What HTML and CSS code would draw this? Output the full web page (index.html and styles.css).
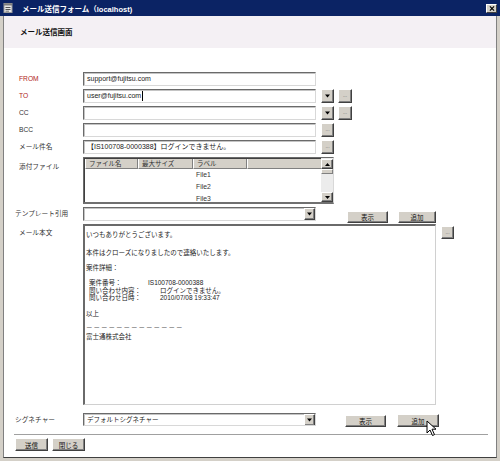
FILE: index.html
```html
<!DOCTYPE html>
<html lang="ja">
<head>
<meta charset="utf-8">
<title>メール送信フォーム</title>
<link rel="stylesheet" href="styles.css">
</head>
<body>
<div class="window">
  <div class="titlebar">
    <svg class="app-icon" viewBox="0 0 10 10">
      <rect x="1" y="0.5" width="8" height="9" fill="#e6e6e6" stroke="#9a9a9a" stroke-width="1"/>
      <rect x="1" y="0.5" width="8" height="2" fill="#7d7d7d"/>
      <line x1="2.5" y1="4.5" x2="7.5" y2="4.5" stroke="#555" stroke-width="1"/>
      <line x1="2.5" y1="6.5" x2="7.5" y2="6.5" stroke="#555" stroke-width="1"/>
      <line x1="2.5" y1="8.2" x2="6" y2="8.2" stroke="#555" stroke-width="0.8"/>
    </svg>
    <span class="title">メール送信フォーム（localhost)</span>
    <span class="close-btn">
      <svg viewBox="0 0 7 6" class="close-x">
        <path d="M1 0.5 L6 5.5 M6 0.5 L1 5.5" stroke="#000" stroke-width="1.4"/>
      </svg>
    </span>
  </div>

  <div class="client">
    <div class="header"><span class="screen-title">メール送信画面</span></div>

    <div class="form">
      <div class="row">
        <span class="label req">FROM</span>
        <div class="field">support@fujitsu.com</div>
      </div>
      <div class="row">
        <span class="label req">TO</span>
        <div class="field">user@fujitsu.com<span class="caret"></span></div>
        <span class="btn drop-btn"><svg viewBox="0 0 5 4"><polygon points="0,0.5 5,0.5 2.5,3.5" fill="#000"/></svg></span>
        <span class="btn dots-btn">...</span>
      </div>
      <div class="row">
        <span class="label">CC</span>
        <div class="field"></div>
        <span class="btn drop-btn"><svg viewBox="0 0 5 4"><polygon points="0,0.5 5,0.5 2.5,3.5" fill="#000"/></svg></span>
        <span class="btn dots-btn">...</span>
      </div>
      <div class="row">
        <span class="label">BCC</span>
        <div class="field"></div>
        <span class="btn dots-btn single">...</span>
      </div>
      <div class="row">
        <span class="label">メール件名</span>
        <div class="field">【IS100708-0000388】ログインできません。</div>
        <span class="btn dots-btn single">...</span>
      </div>

      <div class="row row-files">
        <span class="label label-top">添付ファイル</span>
        <div class="filelist">
          <div class="filelist-main">
            <div class="filelist-head">
              <span class="hcell c1">ファイル名</span>
              <span class="hcell c2">最大サイズ</span>
              <span class="hcell c3">ラベル</span>
              <span class="hcell c4"></span>
            </div>
            <div class="filelist-body">
              <div class="frow">File1</div>
              <div class="frow">File2</div>
              <div class="frow">File3</div>
            </div>
          </div>
          <div class="vscroll">
            <span class="sbtn"><svg viewBox="0 0 5 3"><polygon points="2.5,0 5,3 0,3" fill="#000"/></svg></span>
            <span class="sthumb"></span>
            <span class="strack"></span>
            <span class="sbtn"><svg viewBox="0 0 5 3"><polygon points="0,0 5,0 2.5,3" fill="#000"/></svg></span>
          </div>
        </div>
      </div>

      <div class="row row-template">
        <span class="label label-wide">テンプレート引用</span>
        <div class="field select">
          <span class="select-text"></span>
          <span class="btn select-arrow"><svg viewBox="0 0 5 4"><polygon points="0,0.5 5,0.5 2.5,3.5" fill="#000"/></svg></span>
        </div>
        <span class="btn push tpl-show">表示</span>
        <span class="btn push tpl-add">追加</span>
      </div>

      <div class="row row-body">
        <span class="label label-top2">メール本文</span>
        <div class="field mailbody">
          <p class="p1">いつもありがとうございます。</p>
          <p class="p2">本件はクローズになりましたので連絡いたします。</p>
          <p class="p3">案件詳細：</p>
          <div class="details">
            <div class="drow"><span class="k k1">案件番号：</span><span class="v">IS100708-0000388</span></div>
            <div class="drow"><span class="k">問い合わせ内容：</span><span class="v">ログインできません。</span></div>
            <div class="drow"><span class="k">問い合わせ日時：</span><span class="v">2010/07/08 19:33:47</span></div>
          </div>
          <p class="p5">以上</p>
          <p class="p6 dashes">－－－－－－－－－－－－－</p>
          <p class="p7">富士通株式会社</p>
        </div>
        <span class="btn dots-btn body-dots">...</span>
      </div>

      <div class="row row-sign">
        <span class="label label-wide">シグネチャー</span>
        <div class="field select">
          <span class="select-text">デフォルトシグネチャー</span>
          <span class="btn select-arrow"><svg viewBox="0 0 5 4"><polygon points="0,0.5 5,0.5 2.5,3.5" fill="#000"/></svg></span>
        </div>
        <span class="btn push sig-show">表示</span>
        <span class="btn push sig-add">追加</span>
      </div>
    </div>

    <div class="separator"></div>

    <div class="footer">
      <span class="btn push foot-btn">送信</span>
      <span class="btn push foot-btn">閉じる</span>
    </div>
  </div>

  <svg class="cursor" viewBox="0 0 12 17">
    <path d="M1 1 L1 13 L4 10 L6.5 15.5 L8.5 14.6 L6 9.2 L10 9.2 Z" fill="#fff" stroke="#000" stroke-width="1"/>
  </svg>
</div>
</body>
</html>
```

FILE: styles.css
```css
* { box-sizing: border-box; }
html, body { margin: 0; padding: 0; }
body {
  width: 500px;
  height: 461px;
  overflow: hidden;
  background: #d4d0c8;
  font-family: "Liberation Sans", "Noto Sans CJK JP", sans-serif;
  color: #222;
}
.window {
  width: 500px;
  height: 461px;
  display: flex;
  flex-direction: column;
  position: relative;
}

/* title bar */
.titlebar {
  height: 16px;
  flex: none;
  background: #0b2364;
  display: flex;
  align-items: center;
  padding: 0 3px;
}
.app-icon { width: 10px; height: 10px; flex: none; }
.title {
  flex: 1;
  margin-left: 9px;
  color: #fff;
  font-weight: bold;
  font-size: 7.5px;
  white-space: nowrap;
}
.close-btn {
  width: 11px;
  height: 9px;
  flex: none;
  background: #d4d0c8;
  border-top: 1px solid #fff;
  border-left: 1px solid #fff;
  border-right: 1px solid #404040;
  border-bottom: 1px solid #404040;
  display: flex;
  align-items: center;
  justify-content: center;
}
.close-x { width: 6px; height: 5px; }

/* client area */
.client {
  flex: 1;
  margin: 0 3px 3px;
  background: #fff;
  border-left: 1px solid #808080;
  border-right: 1px solid #808080;
  border-bottom: 1px solid #404040;
  display: flex;
  flex-direction: column;
}
.header {
  height: 32px;
  flex: none;
  background: #f4f0f4;
  padding: 5px 0 0 16px;
}
.screen-title {
  font-size: 7.5px;
  font-weight: bold;
  color: #111;
  line-height: 9px;
}

/* form */
.form {
  display: flex;
  flex-direction: column;
  gap: 3px;
  padding: 24px 0 0 15px;
}
.row {
  display: flex;
  align-items: center;
  height: 14px;
}
.label {
  width: 64px;
  flex: none;
  font-size: 6.7px;
  line-height: 8px;
  color: #333;
  white-space: nowrap;
}
.label.req { color: #b02424; }
.label-wide { width: 68px; margin-left: -4px; }

.field {
  width: 233px;
  height: 14px;
  flex: none;
  background: #fff;
  border-top: 1px solid #6a6a6a;
  border-left: 1px solid #6a6a6a;
  border-right: 1px solid #d8d8d8;
  border-bottom: 1px solid #d8d8d8;
  box-shadow: inset 1px 1px 0 #c4c4c4;
  padding: 0 2px 0 3px;
  font-size: 7px;
  line-height: 12px;
  color: #222;
  white-space: nowrap;
  overflow: hidden;
}
.caret {
  display: inline-block;
  width: 1px;
  height: 10px;
  background: #000;
  vertical-align: middle;
  margin-left: 1px;
}

/* raised buttons */
.btn {
  flex: none;
  background: #d4d0c8;
  border-top: 1px solid #fff;
  border-left: 1px solid #fff;
  border-right: 1px solid #404040;
  border-bottom: 1px solid #404040;
  box-shadow: inset -1px -1px 0 #808080;
  display: flex;
  align-items: center;
  justify-content: center;
}
.drop-btn { width: 13px; height: 14px; margin-left: 5px; }
.drop-btn svg { width: 5px; height: 4px; }
.dots-btn {
  width: 14px;
  height: 14px;
  margin-left: 4px;
  font-size: 5px;
  color: #666;
  line-height: 1;
  padding-bottom: 1px;
}
.dots-btn.single { width: 13px; margin-left: 5px; }

/* attachments */
.row-files { height: 47px; align-items: flex-start; }
.label-top { padding-top: 6px; }
.filelist {
  width: 251px;
  height: 47px;
  flex: none;
  display: flex;
  border-top: 1px solid #6a6a6a;
  border-left: 1px solid #6a6a6a;
  border-right: 1px solid #d8d8d8;
  border-bottom: 2px solid #707070;
  box-shadow: inset 1px 1px 0 #404040;
  background: #fff;
}
.filelist-main { flex: 1; display: flex; flex-direction: column; padding: 1px 0 0 1px; }
.filelist-head { height: 10px; display: flex; background: #d4d0c8; }
.hcell {
  height: 10px;
  font-size: 6.5px;
  line-height: 9px;
  padding-left: 3px;
  color: #333;
  border-right: 1px solid #808080;
  border-bottom: 1px solid #808080;
  border-left: 1px solid #fff;
  white-space: nowrap;
}
.c1 { width: 53px; }
.c2 { width: 55px; }
.c3 { width: 54px; }
.c4 { flex: 1; border-right: none; }
.filelist-body { padding: 0 0 0 111px; }
.frow { font-size: 6.8px; line-height: 12px; color: #333; }
.vscroll {
  width: 12px;
  flex: none;
  display: flex;
  flex-direction: column;
  background: #ececec;
  padding-top: 1px;
}
.sbtn {
  width: 12px;
  height: 10px;
  flex: none;
  background: #d4d0c8;
  border-top: 1px solid #fff;
  border-left: 1px solid #fff;
  border-right: 1px solid #404040;
  border-bottom: 1px solid #404040;
  box-shadow: inset -1px -1px 0 #808080;
  display: flex;
  align-items: center;
  justify-content: center;
}
.sbtn svg { width: 5px; height: 3px; }
.sthumb {
  height: 5px;
  flex: none;
  background: #d4d0c8;
  border: 1px solid;
  border-color: #fff #808080 #808080 #fff;
}
.strack { flex: 1; }

/* select boxes */
.select { display: flex; align-items: center; padding: 0 0 0 3px; }
.select-text { flex: 1; font-size: 6.5px; color: #222; }
.select-arrow { width: 11px; height: 12px; }
.select-arrow svg { width: 5px; height: 4px; }

.push {
  height: 12px;
  font-size: 6.5px;
  color: #111;
  align-self: flex-start;
}
.tpl-show { width: 41px; margin-left: 31px; margin-top: 4px; }
.tpl-add { width: 38px; margin-left: 10px; margin-top: 4px; }

/* mail body */
.row-body { height: 181px; align-items: flex-start; }
.label-top2 { padding-top: 5px; }
.mailbody {
  width: 353px;
  height: 181px;
  border-top: 2px solid #6a6a6a;
  border-left: 2px solid #6a6a6a;
  border-right: 1px solid #d0d0d0;
  border-bottom: 1px solid #d0d0d0;
  box-shadow: none;
  padding: 5px 0 0 1px;
  font-size: 6.5px;
  line-height: 8px;
  color: #222;
}
.mailbody p { margin: 0; }
.p2 { margin-top: 10px !important; }
.p3 { margin-top: 7px !important; }
.details { margin-top: 7px; padding-left: 3px; }
.drow { display: flex; height: 7.6px; line-height: 7.6px; }
.k { width: 71px; flex: none; }
.k.k1 { width: 59px; }
.p5 { margin-top: 8px !important; }
.p6 { margin-top: 6px !important; letter-spacing: 1px; }
.p7 { margin-top: 1px !important; }
.body-dots { width: 13px; height: 13px; margin-left: 5px; margin-top: 2px; }

/* signature */
.row-sign { height: 13px; margin-top: 5px; }
.row-sign .field { height: 13px; }
.sig-show { width: 41px; margin-left: 29px; margin-top: 2px; }
.sig-add { width: 42px; height: 13px; margin-left: 11px; margin-top: 1px; }

/* footer */
.separator {
  height: 2px;
  margin: 8px 8px 0 10px;
  border-top: 1px solid #a0a0a0;
  border-bottom: 1px solid #fff;
}
.footer {
  display: flex;
  gap: 4px;
  padding: 2px 0 0 11px;
}
.foot-btn { width: 33px; height: 13px; }

.cursor {
  position: absolute;
  left: 426px;
  top: 420px;
  width: 12px;
  height: 17px;
}
```
